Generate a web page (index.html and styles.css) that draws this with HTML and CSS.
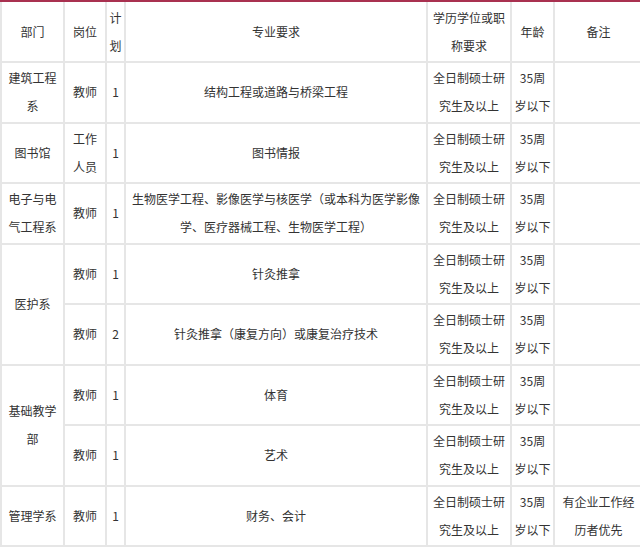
FILE: index.html
```html
<!DOCTYPE html>
<html lang="zh-CN">
<head>
<meta charset="utf-8">
<title>招聘计划</title>
<link rel="stylesheet" href="styles.css">
</head>
<body>
<table class="plan-table">
  <thead>
    <tr>
      <th class="c-dept">部门</th>
      <th class="c-pos">岗位</th>
      <th class="c-num">计划</th>
      <th class="c-major">专业要求</th>
      <th class="c-edu">学历学位或职称要求</th>
      <th class="c-age">年龄</th>
      <th class="c-note">备注</th>
    </tr>
  </thead>
  <tbody>
    <tr>
      <td>建筑工程系</td>
      <td class="c-pos">教师</td>
      <td class="c-num">1</td>
      <td>结构工程或道路与桥梁工程</td>
      <td>全日制硕士研究生及以上</td>
      <td class="c-age">35周岁以下</td>
      <td></td>
    </tr>
    <tr>
      <td>图书馆</td>
      <td class="c-pos">工作人员</td>
      <td class="c-num">1</td>
      <td>图书情报</td>
      <td>全日制硕士研究生及以上</td>
      <td class="c-age">35周岁以下</td>
      <td></td>
    </tr>
    <tr>
      <td>电子与电气工程系</td>
      <td class="c-pos">教师</td>
      <td class="c-num">1</td>
      <td>生物医学工程、影像医学与核医学（或本科为医学影像学、医疗器械工程、生物医学工程）</td>
      <td>全日制硕士研究生及以上</td>
      <td class="c-age">35周岁以下</td>
      <td></td>
    </tr>
    <tr>
      <td rowspan="2">医护系</td>
      <td class="c-pos">教师</td>
      <td class="c-num">1</td>
      <td>针灸推拿</td>
      <td>全日制硕士研究生及以上</td>
      <td class="c-age">35周岁以下</td>
      <td></td>
    </tr>
    <tr>
      <td class="c-pos">教师</td>
      <td class="c-num">2</td>
      <td>针灸推拿（康复方向）或康复治疗技术</td>
      <td>全日制硕士研究生及以上</td>
      <td class="c-age">35周岁以下</td>
      <td></td>
    </tr>
    <tr>
      <td rowspan="2">基础教学部</td>
      <td class="c-pos">教师</td>
      <td class="c-num">1</td>
      <td>体育</td>
      <td>全日制硕士研究生及以上</td>
      <td class="c-age">35周岁以下</td>
      <td></td>
    </tr>
    <tr>
      <td class="c-pos">教师</td>
      <td class="c-num">1</td>
      <td>艺术</td>
      <td>全日制硕士研究生及以上</td>
      <td class="c-age">35周岁以下</td>
      <td></td>
    </tr>
    <tr>
      <td>管理学系</td>
      <td class="c-pos">教师</td>
      <td class="c-num">1</td>
      <td>财务、会计</td>
      <td>全日制硕士研究生及以上</td>
      <td class="c-age">35周岁以下</td>
      <td>有企业工作经历者优先</td>
    </tr>
  </tbody>
</table>
</body>
</html>
```

FILE: styles.css
```css
html, body {
  margin: 0;
  padding: 0;
  background: #ffffff;
  overflow: hidden;
}

.plan-table {
  width: 642px;
  table-layout: fixed;
  border-collapse: separate;
  border-spacing: 0;
  border-top: 2px solid #a93150;
  font-family: "Noto Sans CJK SC", "Noto Sans", sans-serif;
  font-size: 12px;
  line-height: 28px;
  color: #333333;
}

.plan-table th,
.plan-table td {
  box-sizing: border-box;
  padding: 0 2px;
  border-left: 2px solid #e6e6e6;
  border-bottom: 2px solid #e6e6e6;
  text-align: center;
  vertical-align: middle;
  font-weight: normal;
  height: 60.5px;
}

.plan-table th {
  height: 61px;
  padding-top: 1px;
}

.plan-table .c-pos {
  padding: 0 3px;
}

.c-dept { width: 63px; }
.c-pos { width: 42px; }
.c-num { width: 19px; }
.c-major { width: 302px; }
.c-edu { width: 84px; }
.c-age { width: 43px; }
.c-note { width: 89px; }
```
